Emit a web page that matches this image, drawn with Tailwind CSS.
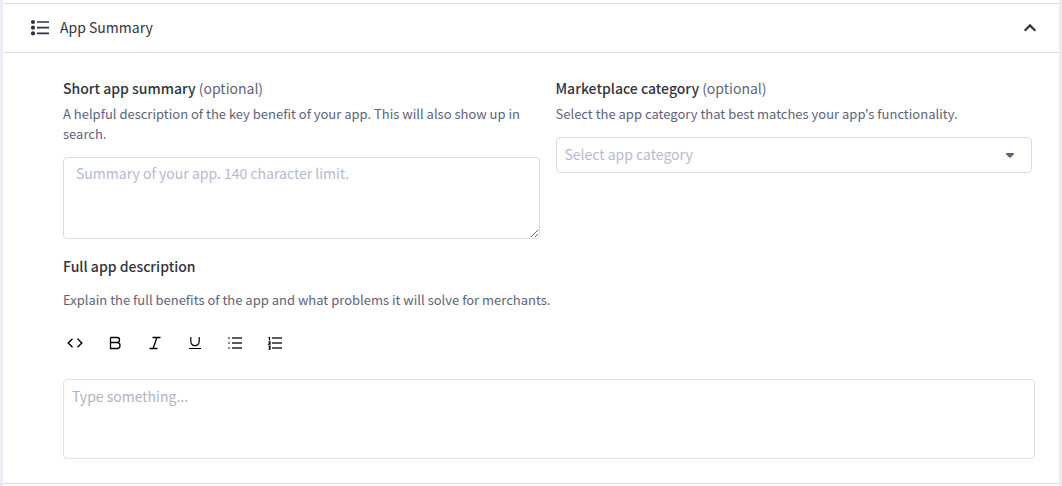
<!DOCTYPE html>
<html lang="en">
<head>
<meta charset="utf-8">
<meta name="viewport" content="width=device-width, initial-scale=1">
<title>App Summary</title>
<script src="https://cdn.jsdelivr.net/npm/@tailwindcss/browser@4"></script>
</head>
<body class="bg-[#ecedf4] px-[3px] font-['Noto_Sans_CJK_SC','Noto_Sans',sans-serif] text-[14px] leading-6 text-[#313440]">
<main class="min-h-screen bg-white pt-[3px]">
  <section class="border-y border-[#d9dce9]">
    <button type="button" aria-expanded="true" class="flex h-[49px] w-full items-center border-b border-[#d9dce9] pr-[21px] pl-[25px] text-left">
      <svg class="size-6 shrink-0" viewBox="0 0 24 24" fill="none" stroke="#313440" stroke-width="1.7" aria-hidden="true">
        <path d="M9 6h12M9 11.700h12M9 17.400h12"/>
        <g fill="#313440" stroke="none"><circle cx="5" cy="6" r="2.100"/><circle cx="5" cy="11.700" r="2.100"/><circle cx="5" cy="17.400" r="2.100"/></g>
      </svg>
      <span class="ml-2 flex-1 pb-0.5">App Summary</span>
      <svg class="size-4 shrink-0" viewBox="0 0 16 16" fill="none" stroke="#313440" stroke-width="2.200" aria-hidden="true"><path d="M2.700 10.700 8 5.400l5.300 5.300"/></svg>
    </button>
    <div class="pt-[23px] pr-6 pb-6 pl-[60px]">
      <div class="mr-[3px] grid grid-cols-2 gap-4">
        <div>
          <label for="summary" class="block"><span class="font-medium">Short app summary</span> <span class="text-[#5e637a]">(optional)</span></label>
          <p id="summary-help" class="mt-1 text-[13px] leading-5 text-[#5e637a]">A helpful description of the key benefit of your app. This will also show up in search.</p>
          <textarea id="summary" aria-describedby="summary-help" placeholder="Summary of your app. 140 character limit." class="mt-[13px] block h-[82px] w-full rounded border border-[#d9dce9] px-3 py-[3px] leading-6 outline-none placeholder:text-[#b4bad1]"></textarea>
        </div>
        <div>
          <label for="category" class="block"><span class="font-medium">Marketplace category</span> <span class="text-[#5e637a]">(optional)</span></label>
          <p class="mt-1 text-[13px] leading-5 text-[#5e637a]">Select the app category that best matches your app's functionality.</p>
          <div class="relative mt-[13px]">
            <select id="category" class="block h-9 w-full appearance-none rounded border border-[#d9dce9] bg-white px-2 pb-0.5 text-[#b4bad1] outline-none"><option>Select app category</option></select>
            <svg class="pointer-events-none absolute top-4 right-[18px] h-[5px] w-2" viewBox="0 0 8 5" fill="#5e637a" aria-hidden="true"><path d="M0 .8C0 .3.300 0 .800 0h6.400c.500 0 .800.300.800.800 0 .300-.100.600-.300.800L4.600 4.600a.900.900 0 0 1-1.200 0L.300 1.600A1 1 0 0 1 0 .800z"/></svg>
          </div>
        </div>
      </div>
      <label for="description" class="mt-[15px] block font-medium">Full app description</label>
      <p class="mt-3 text-[13px] leading-5 text-[#5e637a]">Explain the full benefits of the app and what problems it will solve for merchants.</p>
      <div class="mt-[21px] flex gap-4 text-black" role="toolbar" aria-label="Formatting">
        <button type="button" aria-label="Code" class="flex size-6 items-center justify-center"><svg class="size-4" viewBox="0 0 16 16" fill="none" stroke="currentColor" stroke-width="1.400"><path d="M5.500 3.800 1.200 8l4.300 4.200M10.500 3.800 14.800 8l-4.300 4.200"/></svg></button>
        <button type="button" aria-label="Bold" class="flex size-6 items-center justify-center"><svg class="size-4" viewBox="0 0 16 16" fill="none" stroke="currentColor" stroke-width="1.300"><path d="M3.500 2.500h6.700c1.500 0 2.300 1.100 2.300 2.500s-.800 2.500-2.300 2.500H3.500M10.200 7.500c1.900 0 2.800 1.300 2.800 3s-.900 3-2.800 3H3.500v-11"/></svg></button>
        <button type="button" aria-label="Italic" class="flex size-6 items-center justify-center"><svg class="size-4" viewBox="0 0 16 16" fill="none" stroke="currentColor" stroke-width="1.300"><path d="M5.500 2.500h8M2.500 13.500h8M9.900 2.500l-3.800 11"/></svg></button>
        <button type="button" aria-label="Underline" class="flex size-6 items-center justify-center"><svg class="size-4" viewBox="0 0 16 16" fill="none" stroke="currentColor" stroke-width="1.200"><path d="M3.800 2v4.500a4.200 4.200 0 0 0 8.400 0V2M2 13.500h12"/></svg></button>
        <button type="button" aria-label="Bulleted list" class="flex size-6 items-center justify-center"><svg class="size-4" viewBox="0 0 16 16"><path fill="#888" d="M1 2h2v2H1zM1 7h2v2H1zM1 12h2v2H1z"/><path fill="#5c5c60" d="M5 2h10v2H5zM5 7h10v2H5zM5 12h10v2H5z"/></svg></button>
        <button type="button" aria-label="Numbered list" class="flex size-6 items-center justify-center"><svg class="size-4" viewBox="0 0 16 16"><path fill="#5c5c60" d="M5 2h10v2H5zM5 7h10v2H5zM5 12h10v2H5z"/><path fill="none" stroke="#000" stroke-width="1.200" d="M1.500 2.500h1v3M1.500 6.800h1.500v1L1.700 9.200h2M1.500 11.200H3v3H1.500M2 12.700h1"/></svg></button>
      </div>
      <textarea id="description" placeholder="Type something..." class="mt-6 block h-20 w-full resize-none rounded border border-[#e2e2e5] px-2 py-1 leading-6 outline-none placeholder:text-[#afb4c0]"></textarea>
    </div>
  </section>
</main>
</body>
</html>
